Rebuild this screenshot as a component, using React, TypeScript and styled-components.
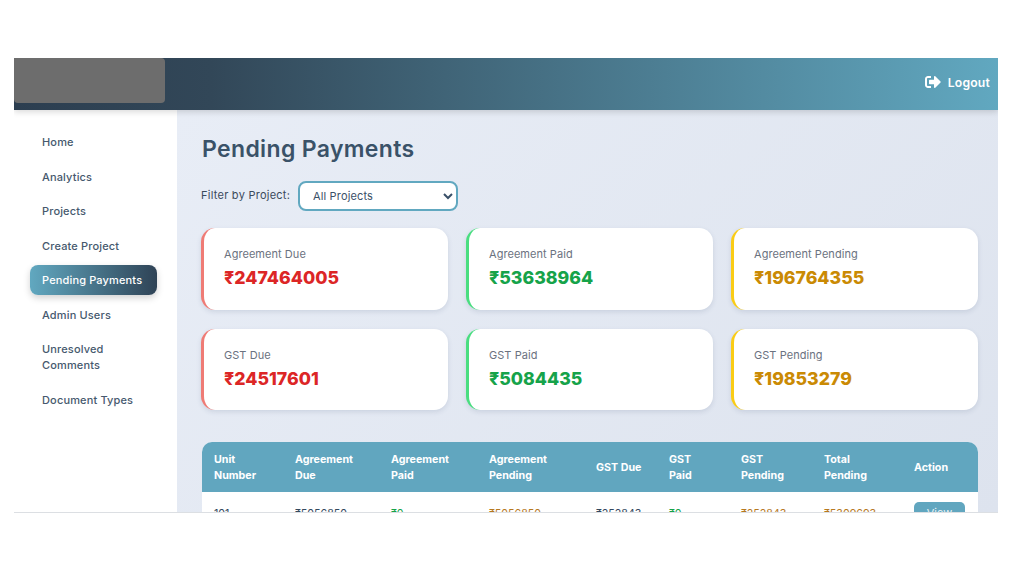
import React from 'react';
import styled, { createGlobalStyle } from 'styled-components';
import { FaSignOutAlt } from 'react-icons/fa';

const Global = createGlobalStyle`
  html, body { margin: 0; padding: 0; background: #fff; }
  body { font-family: Inter, "Liberation Sans", sans-serif; }
  * { box-sizing: border-box; }
`;

const Page = styled.div`
  width: 1024px;
  height: 576px;
  padding: 58px 26px 63px 14px;
  background: #fff;
  overflow: hidden;
`;
const Frame = styled.div`
  height: 455px;
  display: flex;
  flex-direction: column;
  overflow: hidden;
  border-bottom: 1px solid #dcdfe3;
`;
const Header = styled.header`
  height: 52px;
  flex: none;
  display: flex;
  justify-content: space-between;
  align-items: flex-start;
  padding-right: 8px;
  background: linear-gradient(90deg, #2c3e50 0%, #324758 20%, #61a8c0 100%);
  box-shadow: 0 2px 6px rgba(0, 0, 0, 0.15);
  position: relative;
  z-index: 2;
`;
const LogoBlur = styled.div`
  width: 151px;
  height: 45px;
  background: #6d6d6d;
  border-radius: 0 4px 4px 4px;
`;
const Logout = styled.button`
  display: flex;
  align-items: center;
  gap: 7px;
  height: 48px;
  padding: 0;
  border: 0;
  background: none;
  color: #fff;
  font: 600 12.2px Inter, sans-serif;
  letter-spacing: 0.2px;
  svg { width: 16px; height: 16px; }
`;
const Body = styled.div`
  flex: 1;
  display: flex;
  min-height: 0;
`;
const Sidebar = styled.nav`
  width: 163px;
  flex: none;
  background: #fff;
  padding: 17px 20px 0 16px;
  display: flex;
  flex-direction: column;
  gap: 4.5px;
`;
const NavItem = styled.a<{ $active?: boolean }>`
  display: block;
  padding: 7px 12px;
  border-radius: 8px;
  font-size: 11px;
  font-weight: 450;
  line-height: 16px;
  letter-spacing: 0.15px;
  color: ${p => (p.$active ? '#fff' : '#46596e')};
  background: ${p => (p.$active ? 'linear-gradient(90deg, #61a8c0, #2f4356)' : 'none')};
  box-shadow: ${p => (p.$active ? '0 3px 7px rgba(0,0,0,0.18)' : 'none')};
`;
const Main = styled.main`
  flex: 1;
  min-width: 0;
  padding: 22px 20px 0 24px;
  background: linear-gradient(135deg, #e8edf6 0%, #dde3ee 100%);
`;
const Title = styled.h1`
  margin: 0 0 15px 1px;
  font-size: 23px;
  line-height: 34px;
  font-weight: 600;
  letter-spacing: 0.35px;
  color: #3a5268;
`;
const FilterRow = styled.div`
  display: flex;
  align-items: center;
  gap: 8px;
  margin-bottom: 17px;
`;
const FilterLabel = styled.label`
  width: 89px;
  padding-bottom: 2px;
  font-size: 11px;
  font-weight: 400;
  letter-spacing: 0.25px;
  white-space: nowrap;
  color: #3a4a5c;
`;
const Select = styled.select`
  width: 160px;
  height: 30px;
  padding: 0 9px;
  border: 2px solid #61a8c0;
  border-radius: 8px;
  background: #fff;
  font: 400 11px Inter, sans-serif;
  letter-spacing: 0.15px;
  color: #3a5068;
`;
const Cards = styled.div`
  display: grid;
  grid-template-columns: repeat(3, 247px);
  grid-auto-rows: 81.5px;
  column-gap: 18px;
  row-gap: 19px;
  margin-bottom: 32px;
`;
const Card = styled.div<{ $edge: string }>`
  display: flex;
  flex-direction: column;
  justify-content: center;
  gap: 3px;
  padding: 0 18px 0 20px;
  background: #fff;
  border-left: 3px solid ${p => p.$edge};
  border-radius: 14px;
  box-shadow: 0 2px 5px rgba(60, 80, 110, 0.14);
`;
const CardLabel = styled.div`
  font-size: 11px;
  line-height: 16px;
  letter-spacing: 0.05px;
  color: #6b7280;
`;
const CardValue = styled.div<{ $color: string }>`
  font-size: 17.7px;
  line-height: 26px;
  font-weight: 800;
  color: ${p => p.$color};
`;
const TableWrap = styled.div`
  width: 776px;
  margin-left: 1px;
  border-radius: 10px 10px 0 0;
  overflow: hidden;
  background: #fff;
`;
const Table = styled.table`
  width: 100%;
  border-collapse: collapse;
  table-layout: fixed;
`;
const Th = styled.th<{ $w: number }>`
  width: ${p => p.$w}px;
  height: 50px;
  padding: 1px 0 0 12px;
  background: #61a6bf;
  color: #fff;
  text-align: left;
  font-size: 10.7px;
  line-height: 16px;
  font-weight: 700;
  white-space: pre-line;
`;
const Td = styled.td<{ $color?: string }>`
  padding: 14px 0 8px 12px;
  vertical-align: top;
  font-size: 10.7px;
  line-height: 16px;
  color: ${p => p.$color || '#34495e'};
`;
const ViewButton = styled.button`
  width: 51px;
  height: 22px;
  margin-top: -4px;
  padding: 0;
  display: block;
  border: 0;
  border-radius: 5px;
  background: #61a6bf;
  color: #e8f2f6;
  font: 400 11px Inter, sans-serif;
`;

const nav = ['Home', 'Analytics', 'Projects', 'Create Project', 'Pending Payments', 'Admin Users', 'Unresolved Comments', 'Document Types'];
const RED = '#dc2626', GREEN = '#16a34a', AMBER = '#ca8a04';
const cards = [
  ['Agreement Due', '₹247464005', '#ef7b75', RED],
  ['Agreement Paid', '₹53638964', '#4ade80', GREEN],
  ['Agreement Pending', '₹196764355', '#facc15', AMBER],
  ['GST Due', '₹24517601', '#ef7b75', RED],
  ['GST Paid', '₹5084435', '#4ade80', GREEN],
  ['GST Pending', '₹19853279', '#facc15', AMBER],
];
const cols: [string, number][] = [
  ['Unit\nNumber', 81], ['Agreement\nDue', 96], ['Agreement\nPaid', 98], ['Agreement\nPending', 107],
  ['GST Due', 73], ['GST\nPaid', 72], ['GST\nPending', 83], ['Total\nPending', 90], ['Action', 76],
];
const ORANGE = '#b7791f';

export default function App() {
  return (
    <Page>
      <Global />
      <Frame>
        <Header>
          <LogoBlur />
          <Logout><FaSignOutAlt />Logout</Logout>
        </Header>
        <Body>
          <Sidebar>
            {nav.map(n => <NavItem key={n} $active={n === 'Pending Payments'}>{n}</NavItem>)}
          </Sidebar>
          <Main>
            <Title>Pending Payments</Title>
            <FilterRow>
              <FilterLabel>Filter by Project:</FilterLabel>
              <Select><option>All Projects</option></Select>
            </FilterRow>
            <Cards>
              {cards.map(c => (
                <Card key={c[0]} $edge={c[2]}>
                  <CardLabel>{c[0]}</CardLabel>
                  <CardValue $color={c[3]}>{c[1]}</CardValue>
                </Card>
              ))}
            </Cards>
            <TableWrap>
              <Table>
                <thead>
                  <tr>{cols.map(([t, w]) => <Th key={t} $w={w}>{t}</Th>)}</tr>
                </thead>
                <tbody>
                  <tr>
                    <Td>101</Td>
                    <Td>₹5056850</Td>
                    <Td $color={GREEN}>₹0</Td>
                    <Td $color={ORANGE}>₹5056850</Td>
                    <Td>₹252843</Td>
                    <Td $color={GREEN}>₹0</Td>
                    <Td $color={ORANGE}>₹252843</Td>
                    <Td $color={ORANGE}>₹5309693</Td>
                    <Td><ViewButton>View</ViewButton></Td>
                  </tr>
                </tbody>
              </Table>
            </TableWrap>
          </Main>
        </Body>
      </Frame>
    </Page>
  );
}
